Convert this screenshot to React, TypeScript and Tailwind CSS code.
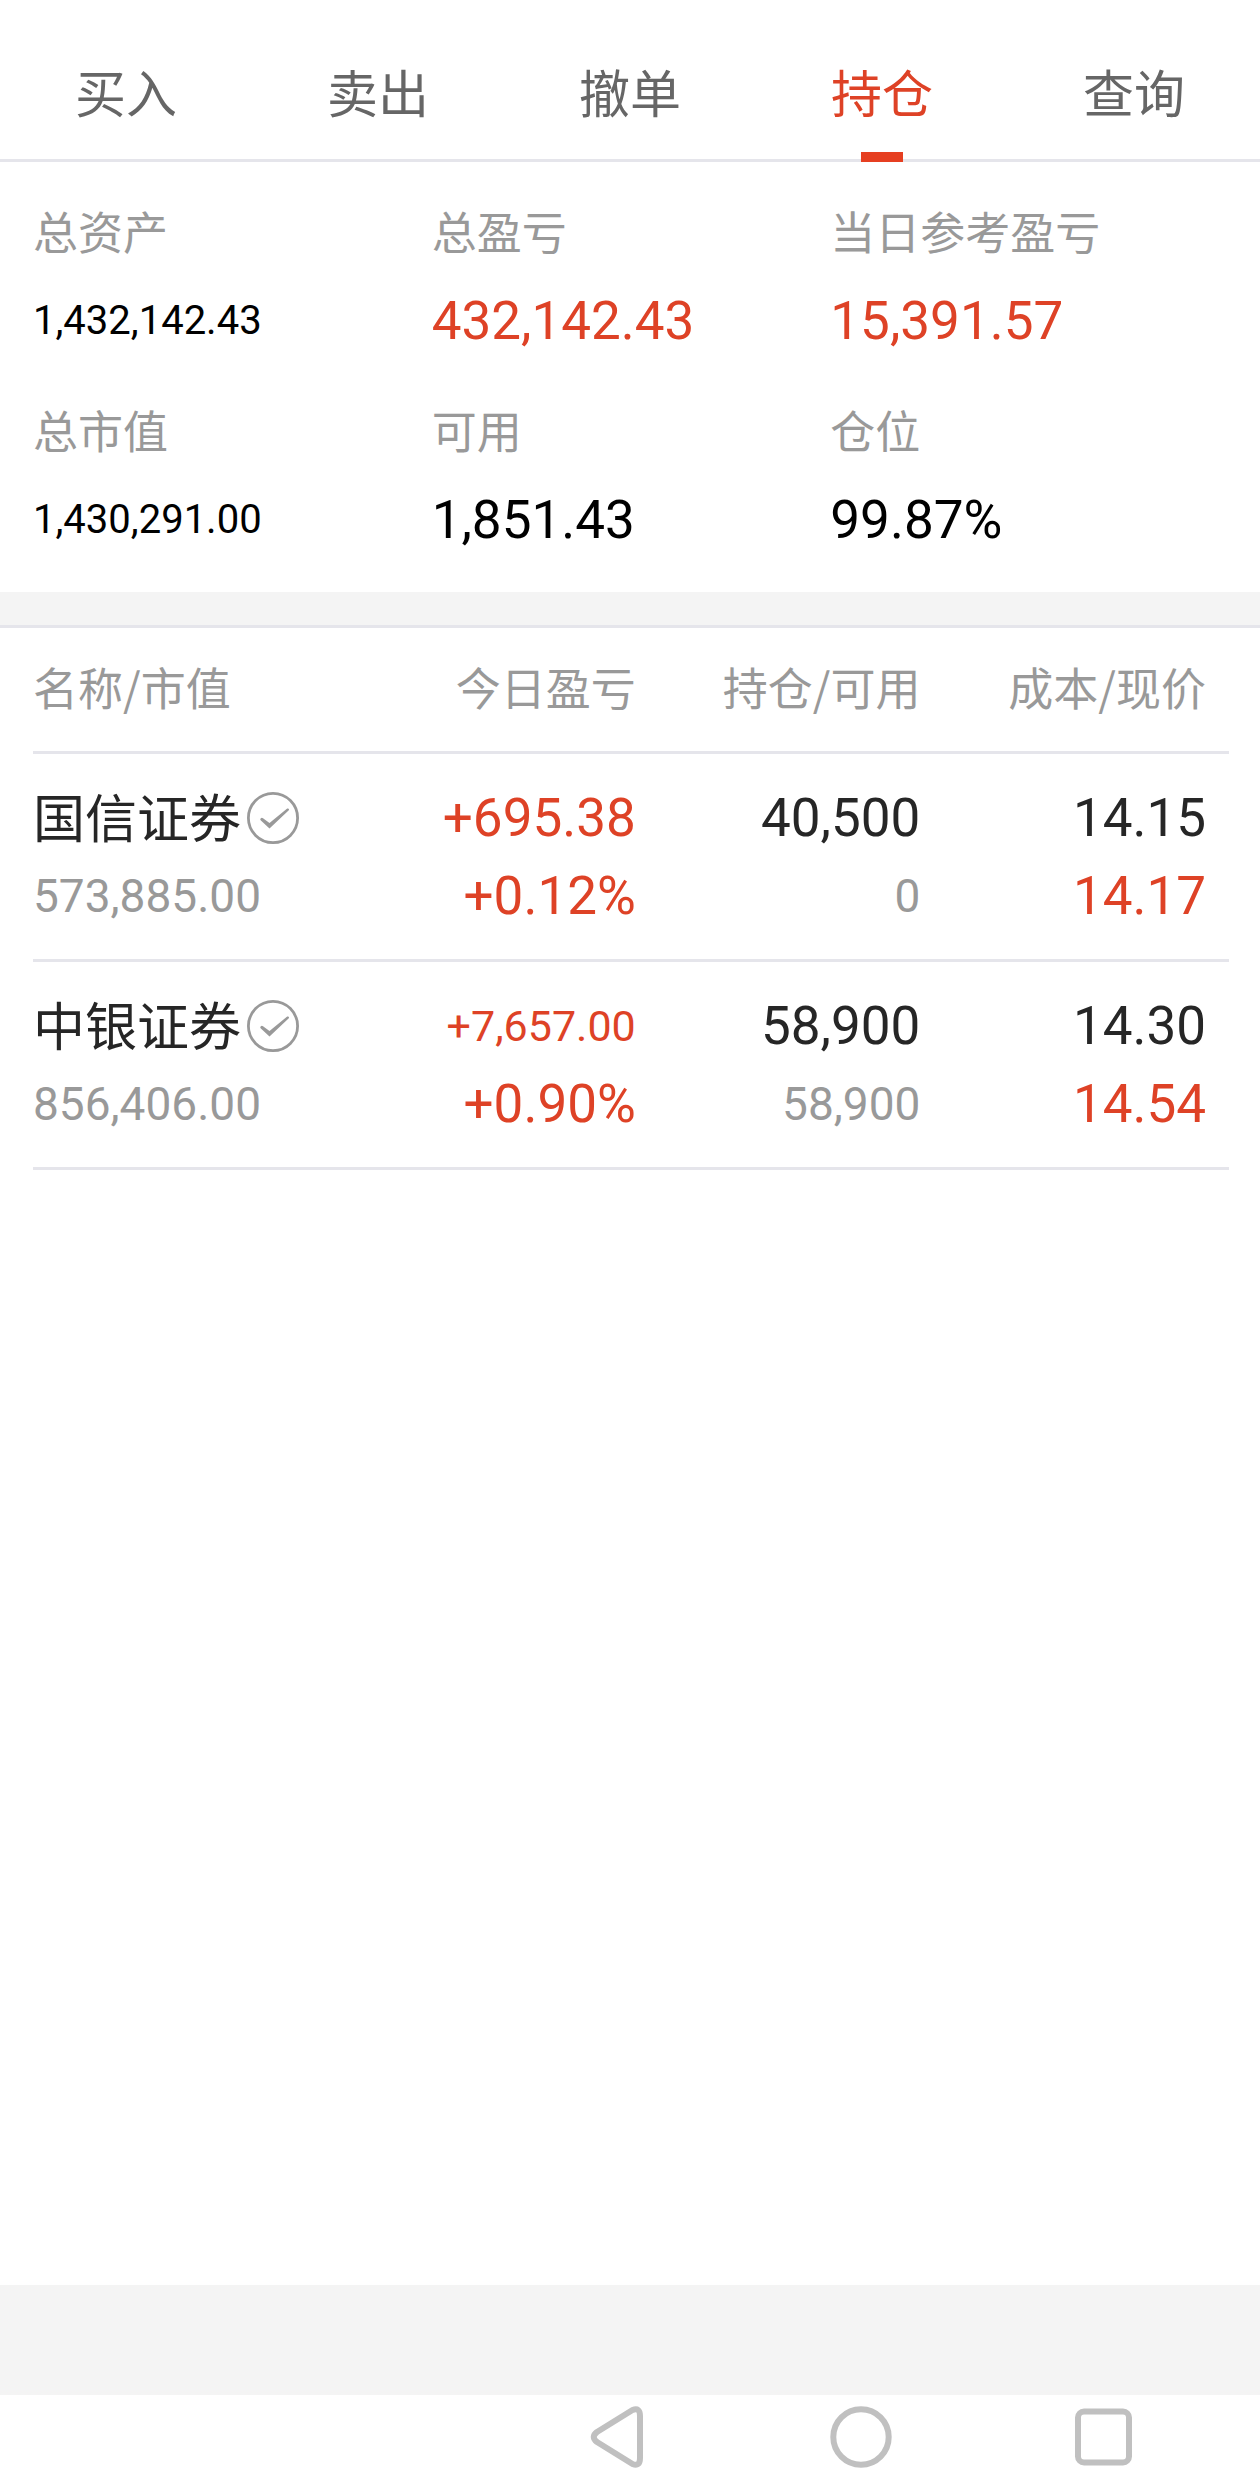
import { useState } from 'react';
import clsx from 'clsx';

const TABS = ['买入', '卖出', '撤单', '持仓', '查询'];

type SummaryItem = {
  label: string;
  value: string;
  rise?: boolean;
};

const SUMMARY: SummaryItem[] = [
  { label: '总资产', value: '1,432,142.43' },
  { label: '总盈亏', value: '432,142.43', rise: true },
  { label: '当日参考盈亏', value: '15,391.57', rise: true },
  { label: '总市值', value: '1,430,291.00' },
  { label: '可用', value: '1,851.43' },
  { label: '仓位', value: '99.87%' },
];

type Holding = {
  name: string;
  marketValue: string;
  profit: string;
  profitRate: string;
  volume: string;
  available: string;
  cost: string;
  price: string;
};

const HOLDINGS: Holding[] = [
  {
    name: '国信证券',
    marketValue: '573,885.00',
    profit: '+695.38',
    profitRate: '+0.12%',
    volume: '40,500',
    available: '0',
    cost: '14.15',
    price: '14.17',
  },
  {
    name: '中银证券',
    marketValue: '856,406.00',
    profit: '+7,657.00',
    profitRate: '+0.90%',
    volume: '58,900',
    available: '58,900',
    cost: '14.30',
    price: '14.54',
  },
];

function CheckBadge() {
  return (
    <svg viewBox="0 0 52 52" className="h-[52px] w-[52px] shrink-0" aria-hidden="true">
      <circle cx="26" cy="26" r="24.6" fill="none" stroke="#999" strokeWidth="2.8" />
      <path
        d="M16 26.2 L22.5 31 L40.2 16.6 A1.2 1.2 0 0 1 41.8 18.3 L22.5 36.4 L13.6 28.3 A1.6 1.6 0 0 1 16 26.2 Z"
        fill="#999"
      />
    </svg>
  );
}

function Tabs() {
  const [active, setActive] = useState('持仓');

  return (
    <nav className="grid grid-cols-5 border-b-3 border-[#e5e5eb]">
      {TABS.map((tab) => (
        <button
          key={tab}
          type="button"
          onClick={() => setActive(tab)}
          className={clsx(
            'relative pt-[55px] pb-[32px] text-[51px] leading-[72px]',
            tab === active ? 'text-[#de4226]' : 'text-[#666]',
          )}
        >
          {tab}
          {tab === active && (
            <span className="absolute -bottom-[3px] left-1/2 h-[10px] w-[42px] -translate-x-1/2 bg-[#e63f21]" />
          )}
        </button>
      ))}
    </nav>
  );
}

function Summary() {
  return (
    <dl className="grid grid-cols-3 gap-y-[39px] pt-[36px] pr-[31px] pb-[35px] pl-[33px]">
      {SUMMARY.map(({ label, value, rise }) => (
        <div key={label}>
          <dt className="text-[45px] leading-[66px] text-[#999]">{label}</dt>
          <dd
            className={clsx(
              "mt-[20px] font-['Roboto',sans-serif] leading-[74px]",
              value.length > 10 ? 'text-[40px]' : 'text-[53px]',
              rise ? 'text-[#de4226]' : 'text-black',
            )}
          >
            {value}
          </dd>
        </div>
      ))}
    </dl>
  );
}

const numberCell = "border-b-3 border-[#e5e5eb] p-0 text-right font-['Roboto',sans-serif] text-[53px] leading-[78px]";

function HoldingRow({ holding }: { holding: Holding }) {
  return (
    <tr className="h-[208px]">
      <td className="border-b-3 border-[#e5e5eb] p-0">
        <div className="flex h-[78px] items-center gap-[6px] text-[52px] whitespace-nowrap text-[#262626]">
          <span className="pb-1">{holding.name}</span>
          <CheckBadge />
        </div>
        <div className="font-['Roboto',sans-serif] text-[46px] leading-[78px] text-[#999]">
          {holding.marketValue}
        </div>
      </td>
      <td className={clsx(numberCell, 'text-[#de4226]')}>
        <div className={clsx('h-[78px]', holding.profit.length > 8 && 'text-[43px]')}>{holding.profit}</div>
        <div>{holding.profitRate}</div>
      </td>
      <td className={numberCell}>
        <div className="text-[#262626]">{holding.volume}</div>
        <div className="text-[46px] text-[#999]">{holding.available}</div>
      </td>
      <td className={clsx(numberCell, 'pr-[23px]')}>
        <div className="text-[#262626]">{holding.cost}</div>
        <div className="text-[#de4226]">{holding.price}</div>
      </td>
    </tr>
  );
}

function Holdings() {
  const head = 'border-b-3 border-[#e5e5eb] px-0 pt-0 pb-[6px] font-normal';

  return (
    <section className="flex-1 border-t-3 border-[#e5e5eb] pr-[31px] pl-[33px]">
      <table className="w-full table-fixed border-separate border-spacing-0">
        <colgroup>
          <col className="w-[26.5%]" />
          <col className="w-[23.9%]" />
          <col className="w-[23.8%]" />
          <col />
        </colgroup>
        <thead>
          <tr className="h-[126px] text-right text-[45px] text-[#999]">
            <th className={clsx(head, 'text-left')}>名称/市值</th>
            <th className={head}>今日盈亏</th>
            <th className={head}>持仓/可用</th>
            <th className={clsx(head, 'pr-[23px]')}>成本/现价</th>
          </tr>
        </thead>
        <tbody>
          {HOLDINGS.map((holding) => (
            <HoldingRow key={holding.name} holding={holding} />
          ))}
        </tbody>
      </table>
    </section>
  );
}

function SystemBar() {
  const button = 'flex w-[244px] items-center justify-center';

  return (
    <footer className="flex h-[91px] justify-end pr-[34px] pb-[8px]">
      <button type="button" aria-label="返回" className={button}>
        <svg viewBox="0 0 64 64" className="h-16 w-16" fill="none" stroke="#c0c0c0" strokeWidth="6">
          <path d="M48.5 5 L13 27 Q6.5 32 13 37 L48.5 59 Q56 62 56 53 V11 Q56 2 48.5 5 Z" strokeLinejoin="round" />
        </svg>
      </button>
      <button type="button" aria-label="主页" className={button}>
        <svg viewBox="0 0 64 64" className="h-16 w-16" fill="none" stroke="#c0c0c0" strokeWidth="6">
          <circle cx="33" cy="32" r="27.7" />
        </svg>
      </button>
      <button type="button" aria-label="最近任务" className={button}>
        <svg viewBox="0 0 64 64" className="h-16 w-16" fill="none" stroke="#c0c0c0" strokeWidth="6">
          <rect x="6" y="6.5" width="51" height="51" rx="6" />
        </svg>
      </button>
    </footer>
  );
}

export default function App() {
  return (
    <div className="flex min-h-screen flex-col bg-white font-['Noto_Sans_CJK_SC',sans-serif]">
      <Tabs />
      <Summary />
      <div className="h-[33px] bg-[#f4f4f4]" />
      <Holdings />
      <div className="h-[110px] bg-[#f4f4f4]" />
      <SystemBar />
    </div>
  );
}
